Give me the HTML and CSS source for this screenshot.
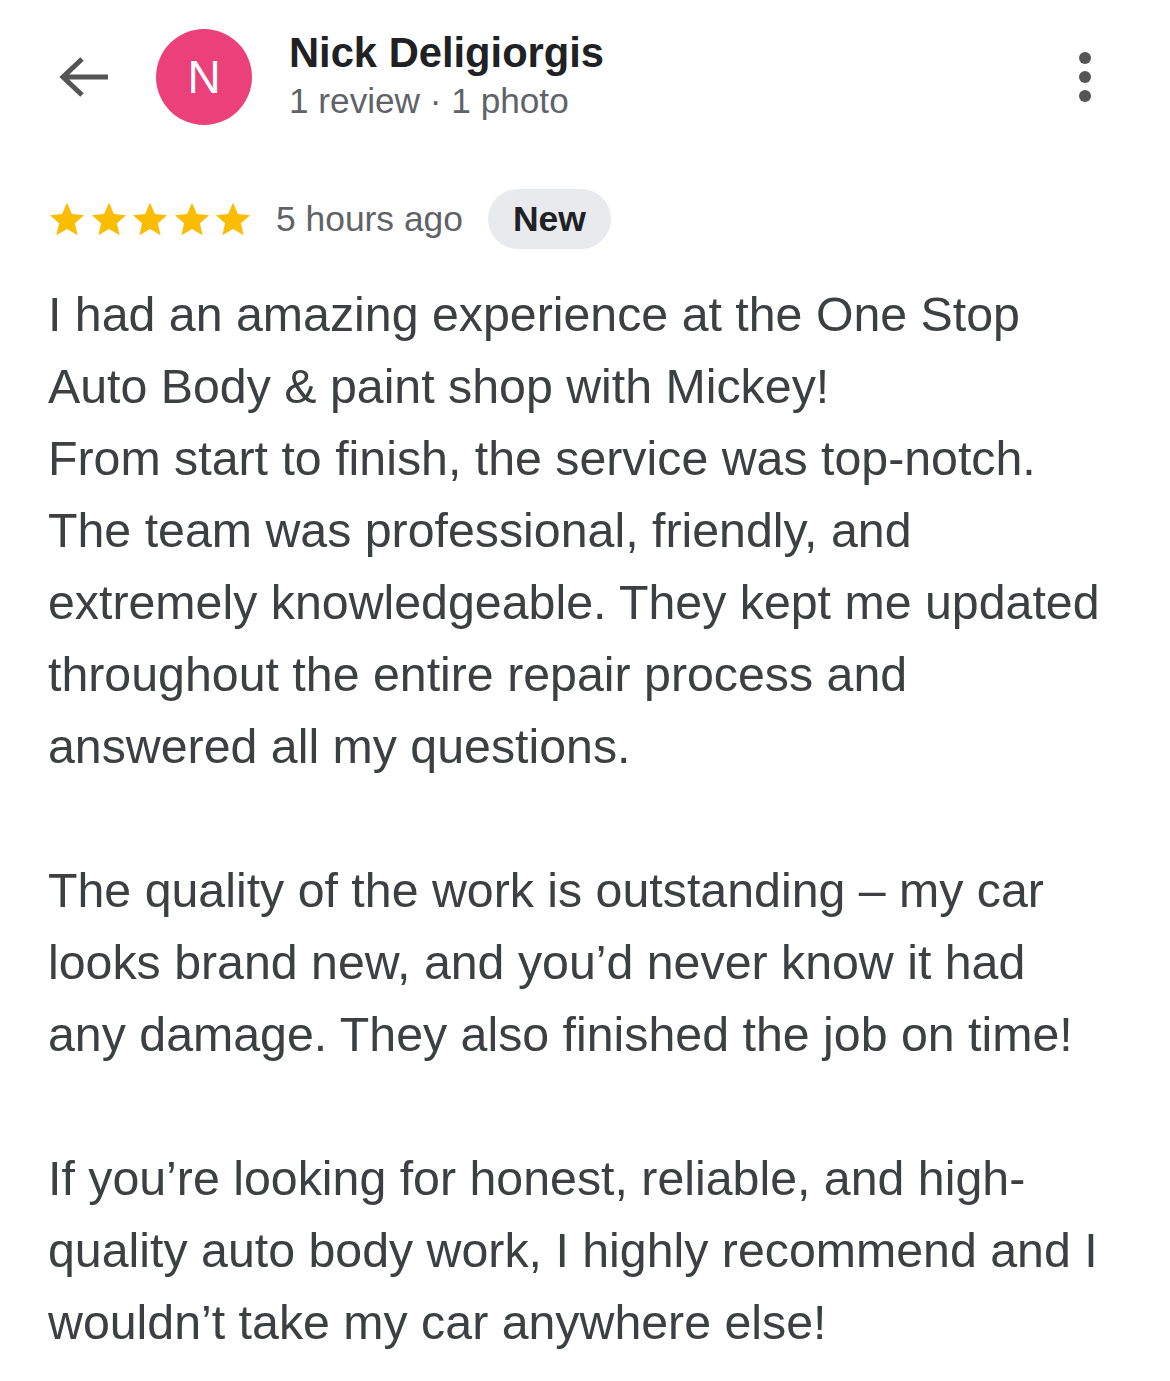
FILE: index.html
```html
<!DOCTYPE html>
<html>
<head>
<meta charset="utf-8">
<link rel="stylesheet" href="styles.css">
</head>
<body>
<div class="page">
  <header class="head">
    <svg class="back" width="52" height="44" viewBox="0 0 52 44"><path d="M50 22H6M24 4L5 22l19 18" fill="none" stroke="#555" stroke-width="5"/></svg>
    <div class="avatar">N</div>
    <div class="who">
      <div class="name">Nick Deligiorgis</div>
      <div class="meta">1 review · 1 photo</div>
    </div>
    <svg class="more" width="14" height="52" viewBox="0 0 14 52"><circle cx="7" cy="7" r="6" fill="#555"/><circle cx="7" cy="26" r="6" fill="#555"/><circle cx="7" cy="45" r="6" fill="#555"/></svg>
  </header>
  <div class="rating">
    <div class="stars">
      <svg viewBox="0 0 24 24"><path d="M12 1.8l3.1 7.1 7.7.7-5.8 5.1 1.7 7.5L12 18.3l-6.7 3.9 1.7-7.5-5.8-5.1 7.7-.7z" fill="#fbbc04"/></svg>
      <svg viewBox="0 0 24 24"><path d="M12 1.8l3.1 7.1 7.7.7-5.8 5.1 1.7 7.5L12 18.3l-6.7 3.9 1.7-7.5-5.8-5.1 7.7-.7z" fill="#fbbc04"/></svg>
      <svg viewBox="0 0 24 24"><path d="M12 1.8l3.1 7.1 7.7.7-5.8 5.1 1.7 7.5L12 18.3l-6.7 3.9 1.7-7.5-5.8-5.1 7.7-.7z" fill="#fbbc04"/></svg>
      <svg viewBox="0 0 24 24"><path d="M12 1.8l3.1 7.1 7.7.7-5.8 5.1 1.7 7.5L12 18.3l-6.7 3.9 1.7-7.5-5.8-5.1 7.7-.7z" fill="#fbbc04"/></svg>
      <svg viewBox="0 0 24 24"><path d="M12 1.8l3.1 7.1 7.7.7-5.8 5.1 1.7 7.5L12 18.3l-6.7 3.9 1.7-7.5-5.8-5.1 7.7-.7z" fill="#fbbc04"/></svg>
    </div>
    <span class="ago">5 hours ago</span>
    <span class="pill">New</span>
  </div>
  <div class="body">
    <p>I had an amazing experience at the One Stop<br>Auto Body &amp; paint shop with Mickey!<br>From start to finish, the service was top-notch.<br>The team was professional, friendly, and<br>extremely knowledgeable. They kept me updated<br>throughout the entire repair process and<br>answered all my questions.</p>
    <p>The quality of the work is outstanding – my car<br>looks brand new, and you’d never know it had<br>any damage. They also finished the job on time!</p>
    <p>If you’re looking for honest, reliable, and high-<br>quality auto body work, I highly recommend and I<br>wouldn’t take my car anywhere else!</p>
  </div>
</div>
</body>
</html>
```
FILE: styles.css
```css
html, body { margin: 0; padding: 0; background: #fff; }
body { font-family: "Liberation Sans", Arial, sans-serif; }
.page { width: 1170px; padding: 0 0 0 48px; box-sizing: border-box; }
.head { display: flex; align-items: center; height: 154px; }
.back { margin-left: 10px; flex: none; }
.avatar { width: 96px; height: 96px; border-radius: 50%; background: #ec407a; color: #fff; font-size: 46px; display: flex; align-items: center; justify-content: center; margin-left: 46px; flex: none; }
.who { margin-left: 37px; flex: 1; margin-top: -2px; }
.name { font-size: 41.7px; font-weight: bold; color: #202124; line-height: 48px; }
.meta { font-size: 35.2px; color: #5f6368; line-height: 44px; margin-top: 2px; }
.more { margin-right: 78px; flex: none; }
.rating { display: flex; align-items: center; height: 62px; margin-top: 34px; }
.stars { display: flex; gap: 3.5px; }
.stars svg { width: 38px; height: 38px; }
.ago { font-size: 35.4px; color: #5f6368; margin-left: 24px; }
.pill { font-size: 35.5px; font-weight: bold; color: #202124; background: #e8eaed; border-radius: 31px; height: 60px; line-height: 60px; padding: 0 25px; margin-left: 25px; }
.body { margin-top: 28px; color: #3c4043; font-size: 48.3px; line-height: 72px; }
.body p { margin: 0 0 72px 0; }
```
